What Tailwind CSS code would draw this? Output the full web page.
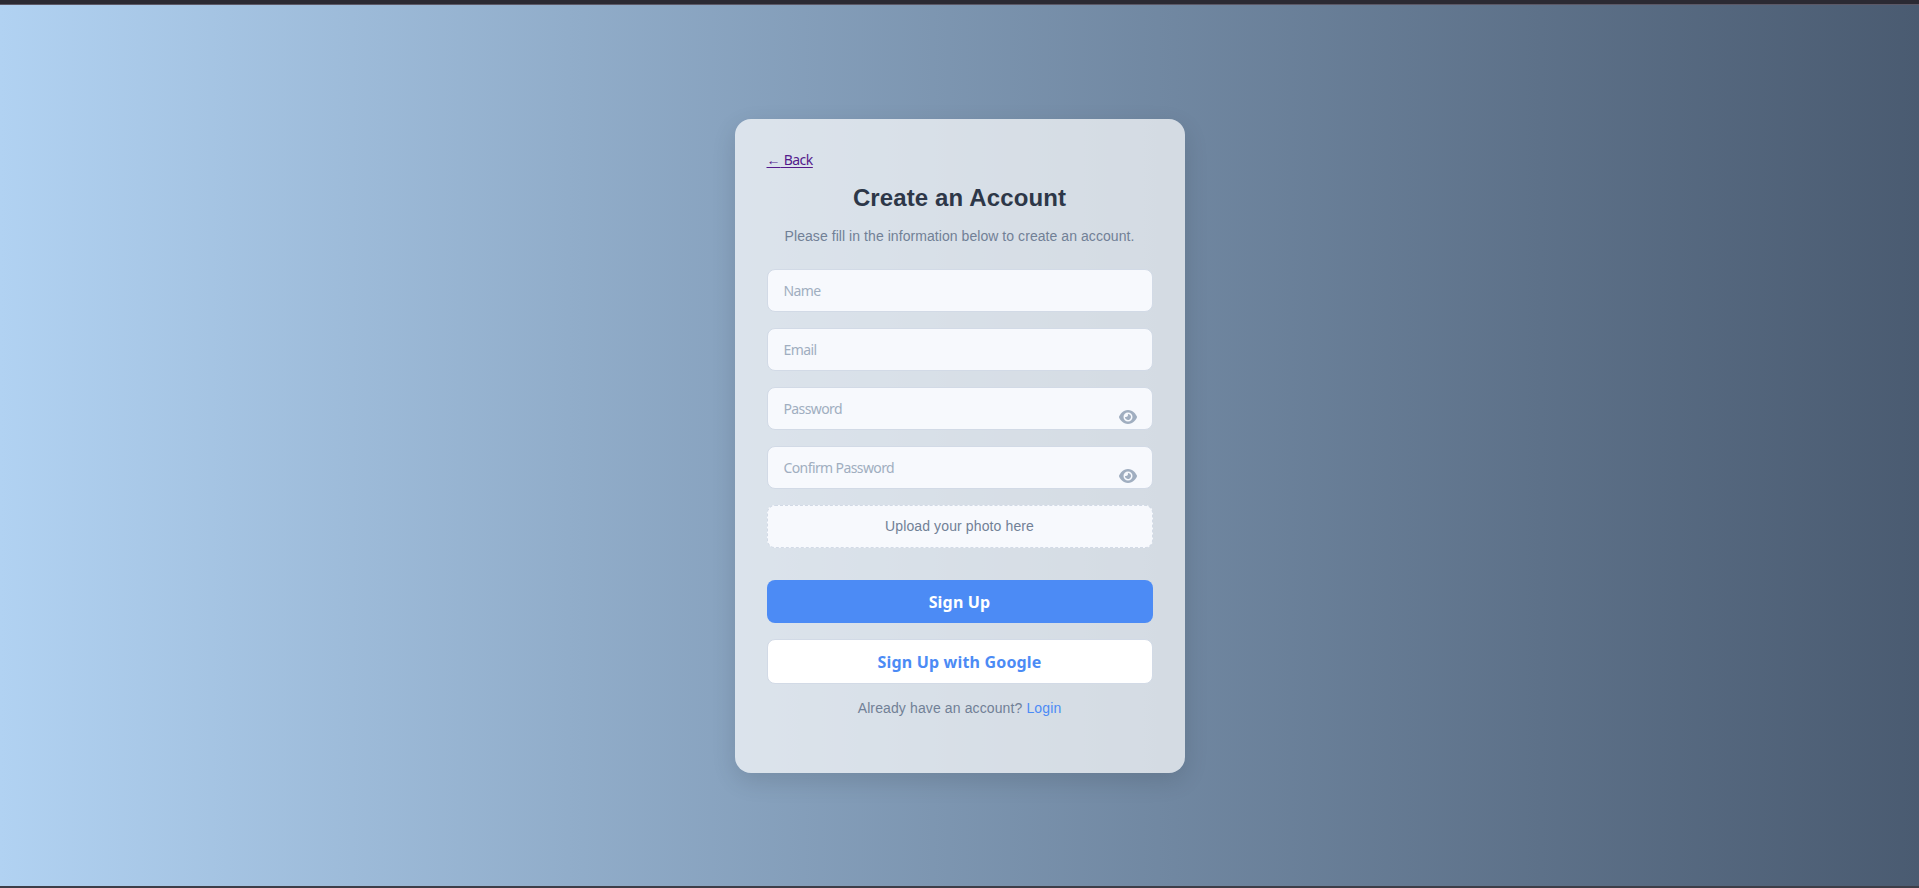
<!DOCTYPE html>
<html lang="en">
<head>
<meta charset="utf-8">
<title>Create an Account</title>
<script src="https://cdn.jsdelivr.net/npm/@tailwindcss/browser@4"></script>
</head>
<body class="h-[888px] overflow-hidden flex flex-col font-['Liberation_Sans',sans-serif]">
<div class="h-[5px] shrink-0 bg-[#2b2a33] border-b border-[#5b5866]"></div>
<main class="flex-1 flex justify-center items-start pt-[114px] bg-linear-to-r from-[#b1d2f2] to-[#4a5b71]">
  <section class="w-[450px] h-[654px] rounded-2xl bg-white/70 shadow-[0_8px_24px_rgba(0,0,0,0.12)] px-8 pt-8 flex flex-col">
    <a class="self-start h-[18px] leading-[18px] text-[14px] tracking-[-0.5px] text-[#551a8b] underline underline-offset-2 font-['Noto_Sans',sans-serif]" href="#"><span class="font-['Liberation_Sans',sans-serif] tracking-normal">←</span> Back</a>
    <h1 class="mt-[13px] h-8 leading-8 text-2xl font-bold text-center tracking-[0.12px] text-[#2d3748]"><span>Create an Account</span></h1>
    <p class="mt-3 h-5 leading-5 text-[14px] text-center tracking-[0.06px] text-[#718096] whitespace-nowrap"><span>Please fill in the information below to create an account.</span></p>
    <form class="mt-[23px] flex flex-col font-['Noto_Sans',sans-serif]">
      <div class="flex flex-col gap-4 text-[14px] tracking-[-0.6px] text-[#a0aec0]">
        <div class="h-[43px] rounded-lg border border-[#d2dae6] bg-[#f7f9fd] px-4 flex items-center"><span>Name</span></div>
        <div class="h-[43px] rounded-lg border border-[#d2dae6] bg-[#f7f9fd] px-4 flex items-center"><span>Email</span></div>
        <div class="h-[43px] rounded-lg border border-[#d2dae6] bg-[#f7f9fd] px-4 flex items-center justify-between"><span>Password</span>
          <svg class="w-[18px] h-4 mt-4 -mr-px" viewBox="0 0 576 512" fill="currentColor"><path d="M288 32c-80.8 0-145.5 36.8-192.6 80.6C48.6 156 17.3 208 2.5 243.7c-3.3 7.9-3.3 16.7 0 24.6C17.3 304 48.6 356 95.4 399.4C142.5 443.2 207.2 480 288 480s145.5-36.8 192.6-80.6c46.8-43.5 78.1-95.4 93-131.1c3.3-7.9 3.3-16.7 0-24.6c-14.9-35.7-46.2-87.7-93-131.1C433.5 68.8 368.8 32 288 32zM144 256a144 144 0 1 1 288 0 144 144 0 1 1-288 0zm144-64c0 35.3-28.7 64-64 64c-7.1 0-13.9-1.2-20.3-3.3c-5.5-1.8-11.9 1.6-11.7 7.4c.3 6.9 1.3 13.8 3.2 20.7c13.7 51.2 66.4 81.6 117.6 67.9s81.6-66.4 67.9-117.6c-11.1-41.5-47.8-69.4-88.6-71.1c-5.8-.2-9.2 6.1-7.4 11.7c2.1 6.4 3.3 13.2 3.3 20.3z"/></svg>
        </div>
        <div class="h-[43px] rounded-lg border border-[#d2dae6] bg-[#f7f9fd] px-4 flex items-center justify-between"><span>Confirm Password</span>
          <svg class="w-[18px] h-4 mt-4 -mr-px" viewBox="0 0 576 512" fill="currentColor"><path d="M288 32c-80.8 0-145.5 36.8-192.6 80.6C48.6 156 17.3 208 2.5 243.7c-3.3 7.9-3.3 16.7 0 24.6C17.3 304 48.6 356 95.4 399.4C142.5 443.2 207.2 480 288 480s145.5-36.8 192.6-80.6c46.8-43.5 78.1-95.4 93-131.1c3.3-7.9 3.3-16.7 0-24.6c-14.9-35.7-46.2-87.7-93-131.1C433.5 68.8 368.8 32 288 32zM144 256a144 144 0 1 1 288 0 144 144 0 1 1-288 0zm144-64c0 35.3-28.7 64-64 64c-7.1 0-13.9-1.2-20.3-3.3c-5.5-1.8-11.9 1.6-11.7 7.4c.3 6.9 1.3 13.8 3.2 20.7c13.7 51.2 66.4 81.6 117.6 67.9s81.6-66.4 67.9-117.6c-11.1-41.5-47.8-69.4-88.6-71.1c-5.8-.2-9.2 6.1-7.4 11.7c2.1 6.4 3.3 13.2 3.3 20.3z"/></svg>
        </div>
        <div class="h-[43px] rounded-lg border border-dashed border-[#d2dae6] bg-[#f7f9fd] flex items-center justify-center font-['Liberation_Sans',sans-serif] tracking-[0.12px] text-[#718096]"><span>Upload your photo here</span></div>
      </div>
      <button type="button" class="mt-8 h-[43px] rounded-lg bg-[#4c8bf5] text-white font-bold text-base tracking-[0.18px]"><span>Sign Up</span></button>
      <button type="button" class="mt-4 h-[45px] rounded-lg border border-[#d2dae6] bg-white text-[#4c8bf5] font-bold text-base tracking-[0.18px]"><span>Sign Up with Google</span></button>
    </form>
    <p class="mt-[14px] h-5 leading-5 text-[14px] text-center tracking-[0.12px] text-[#718096]"><span>Already have an account? <a href="#" class="text-[#4c8bf5]">Login</a></span></p>
  </section>
</main>
<div class="h-0.5 shrink-0 bg-[#3d3e48]"></div>
</body>
</html>
